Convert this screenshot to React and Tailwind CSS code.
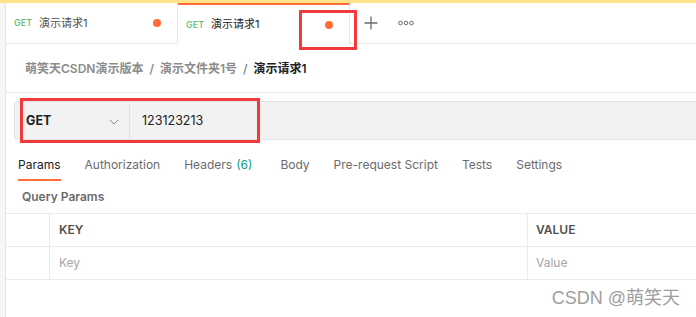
import React from "react";

const SANS = "font-['Inter','Noto_Sans_CJK_SC',sans-serif]";

function RequestTab({ active, title }) {
  return (
    <div
      className={`flex w-[172px] items-center border-r border-[#e6e6e6] pl-[8px] pr-[16px] ${
        active ? "border-t-2 border-t-[#ff6c37] text-[#212121]" : "border-b text-[#505050]"
      }`}
    >
      <span className="text-[9px] font-medium text-[#63b77d]">GET</span>
      <span className="ml-[7px] flex-1 text-[11px]">{title}</span>
      <span className="h-[8px] w-[8px] rounded-full bg-[#ff6c37]" />
    </div>
  );
}

const TABS = [
  { label: "Params", active: true },
  { label: "Authorization" },
  { label: "Headers", count: "(6)" },
  { label: "Body" },
  { label: "Pre-request Script" },
  { label: "Tests" },
  { label: "Settings" },
];

export default function App() {
  return (
    <div className={`relative h-[317px] w-[696px] overflow-hidden bg-white ${SANS}`}>
      <div className="h-[3px] bg-[#ffe28a]" />
      <div className="flex h-[314px]">
        <div className="w-[6px] border-r border-[#e6e6e6] bg-[#f7f7f7]" />
        <div className="flex min-w-0 flex-1 flex-col">
          {/* request tabs */}
          <div className="flex h-[41px]">
            <RequestTab title="演示请求1" />
            <RequestTab title="演示请求1" active />
            <div className="flex flex-1 items-center gap-[20px] border-b border-[#e6e6e6] pl-[14px] text-[#6b6b6b]">
              <svg width="14" height="14" viewBox="0 0 14 14" fill="none" stroke="currentColor" strokeWidth="1.3">
                <path d="M7 0.5v13M0.5 7h13" />
              </svg>
              <svg width="16" height="6" viewBox="0 0 16 6" fill="none" stroke="#6b6b6b" strokeWidth="1">
                <circle cx="2.5" cy="3" r="1.8" />
                <circle cx="8" cy="3" r="1.8" />
                <circle cx="13.5" cy="3" r="1.8" />
              </svg>
            </div>
          </div>

          {/* breadcrumb */}
          <div className="flex h-[49px] items-center gap-[6px] border-b border-[#e6e6e6] pl-[19px] pt-[2px] text-[12px] font-semibold text-[#8c8c8c]">
            <span>萌笑天CSDN演示版本</span>
            <span>/</span>
            <span>演示文件夹1号</span>
            <span>/</span>
            <span className="text-[#212121]">演示请求1</span>
          </div>

          {/* url bar */}
          <div className="ml-[8px] mt-[8px] flex h-[39px] items-center rounded-l-[4px] border border-r-0 border-[#e3e3e3] bg-[#f2f2f2] pt-[2px]">
            <div className="flex h-full w-[115px] items-center justify-between border-r border-[#e0e0e0] pl-[11px] pr-[10px]">
              <span className="text-[12.5px] font-bold text-[#212121]">GET</span>
              <svg width="10" height="6" viewBox="0 0 10 6" fill="none" stroke="#8a8a8a" strokeWidth="1">
                <path d="M1 1l4 4 4-4" />
              </svg>
            </div>
            <span className="pl-[12px] text-[12.5px] text-[#212121]">123123213</span>
          </div>

          {/* request option tabs */}
          <div className="mt-[15px] flex gap-[24px] pl-[12px] text-[12px] leading-[20px] text-[#6b6b6b]">
            {TABS.map((tab) => (
              <div
                key={tab.label}
                className={`border-b-2 pb-[4px] ${
                  tab.active ? "border-[#ff6c37] text-[#212121]" : "border-transparent"
                }`}
              >
                {tab.label}
                {tab.count ? <span className="ml-[4px] mr-[4px] text-[#0f9d7a]">{tab.count}</span> : null}
              </div>
            ))}
          </div>

          <div className="mt-[8px] pl-[16px] text-[12px] font-semibold leading-[16px] text-[#6b6b6b]">
            Query Params
          </div>

          {/* params table */}
          <div className="mt-[8px] grid grid-cols-[44px_478px_1fr] border-t border-[#ebebeb] text-[12px]">
            <div className="h-[33px] border-b border-r border-[#ebebeb]" />
            <div className="flex h-[33px] items-center border-b border-r border-[#ebebeb] pl-[9px] font-semibold text-[#505050]">
              KEY
            </div>
            <div className="flex h-[33px] items-center border-b border-[#ebebeb] pl-[8px] font-semibold text-[#505050]">
              VALUE
            </div>
            <div className="h-[33px] border-b border-r border-[#ebebeb]" />
            <div className="flex h-[33px] items-center border-b border-r border-[#ebebeb] pl-[9px] text-[#a6a6a6]">
              Key
            </div>
            <div className="flex h-[33px] items-center border-b border-[#ebebeb] pl-[8px] text-[#a6a6a6]">
              Value
            </div>
          </div>
        </div>
      </div>

      {/* screenshot annotations */}
      <div className="absolute left-[299px] top-[10px] h-[40px] w-[58px] border-[3px] border-[#f23a3a]" />
      <div className="absolute left-[20px] top-[98px] h-[45px] w-[240px] border-[3px] border-[#f23a3a]" />
      <div className="absolute right-[16px] top-[285px] font-['Liberation_Sans','Noto_Sans_CJK_SC',sans-serif] text-[18px] text-[#9e9e9e]">
        CSDN @萌笑天
      </div>
    </div>
  );
}
